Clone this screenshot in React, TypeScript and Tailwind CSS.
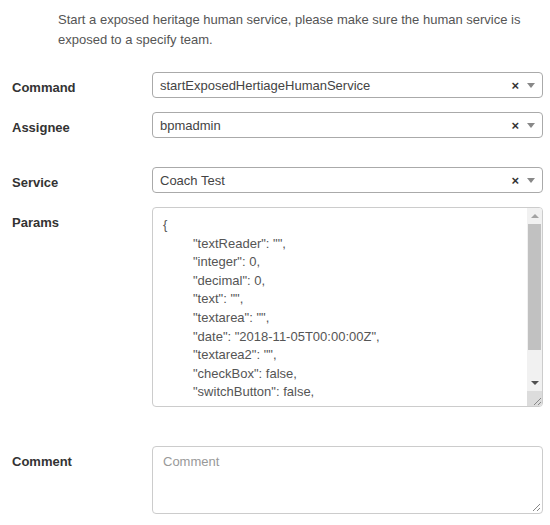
import React from "react";

function Select({ value }: { value: string }) {
  return (
    <div className="h-[26px] w-full border border-[#aaa] rounded-[4px] bg-white flex items-center pl-[7px] pr-[7px]">
      <span className="text-[#444] flex-1 truncate leading-[24px] pt-[1px]">{value}</span>
      <span className="text-[#333] font-bold text-[13px] leading-none mr-[8px]">×</span>
      <span className="w-0 h-0 border-x-[4px] border-x-transparent border-t-[5px] border-t-[#888]" />
    </div>
  );
}

function Grip() {
  return (
    <svg width="10" height="10" viewBox="0 0 10 10" className="block">
      <line x1="9" y1="2" x2="2" y2="9" stroke="#888" strokeWidth="1" />
      <line x1="9" y1="6" x2="6" y2="9" stroke="#888" strokeWidth="1" />
    </svg>
  );
}

const lines = [
  '"textReader": "",',
  '"integer": 0,',
  '"decimal": 0,',
  '"text": "",',
  '"textarea": "",',
  '"date": "2018-11-05T00:00:00Z",',
  '"textarea2": "",',
  '"checkBox": false,',
  '"switchButton": false,',
  '"switchButton2": false,',
];

function Row({
  label,
  children,
  className = "",
}: {
  label: string;
  children: React.ReactNode;
  className?: string;
}) {
  return (
    <div className={"flex " + className}>
      <div className="w-[140px] shrink-0 pt-[7px] font-bold text-[#333] leading-[18.6px]">{label}</div>
      <div className="w-[391px] shrink-0">{children}</div>
    </div>
  );
}

export default function App() {
  return (
    <div className="w-[550px] h-[525px] bg-white overflow-hidden font-['Liberation_Sans',Arial,sans-serif] text-[13px]">
      <p className="pl-[58px] pr-[16px] pt-[10px] leading-[20px] text-[#555]">
        Start a exposed heritage human service, please make sure the human service is exposed to a specify team.
      </p>
      <div className="pl-[12px] pt-[22px] flex flex-col">
        <Row label="Command">
          <Select value="startExposedHertiageHumanService" />
        </Row>
        <Row label="Assignee" className="mt-[14px]">
          <Select value="bpmadmin" />
        </Row>
        <Row label="Service" className="mt-[29px]">
          <Select value="Coach Test" />
        </Row>
        <Row label="Params" className="mt-[14px]">
          <div className="h-[200px] border border-[#ccc] rounded-[4px] bg-white flex overflow-hidden">
            <div className="flex-1 pl-[10px] pt-[8px] text-[#555] leading-[18.6px] overflow-hidden whitespace-nowrap">
              <div>{"{"}</div>
              {lines.map((l) => (
                <div key={l} className="pl-[30px]">
                  {l}
                </div>
              ))}
            </div>
            <div className="w-[15px] shrink-0 flex flex-col bg-[#f1f1f1]">
              <div className="h-[16px] flex items-center justify-center">
                <span className="w-0 h-0 border-x-[4px] border-x-transparent border-b-[4px] border-b-[#a3a3a3]" />
              </div>
              <div className="h-[126px] mx-[1px] bg-[#c1c1c1]" />
              <div className="flex-1" />
              <div className="h-[16px] flex items-center justify-center">
                <span className="w-0 h-0 border-x-[4px] border-x-transparent border-t-[4px] border-t-[#505050]" />
              </div>
              <div className="h-[15px] bg-[#dcdcdc] flex items-end justify-end">
                <Grip />
              </div>
            </div>
          </div>
        </Row>
        <Row label="Comment" className="mt-[39px]">
          <div className="relative h-[68px] border border-[#ccc] rounded-[4px] bg-white pl-[10px] pt-[6px] leading-[18.6px] text-[#999]">
            Comment
            <div className="absolute right-[1px] bottom-[1px]">
              <Grip />
            </div>
          </div>
        </Row>
      </div>
    </div>
  );
}
